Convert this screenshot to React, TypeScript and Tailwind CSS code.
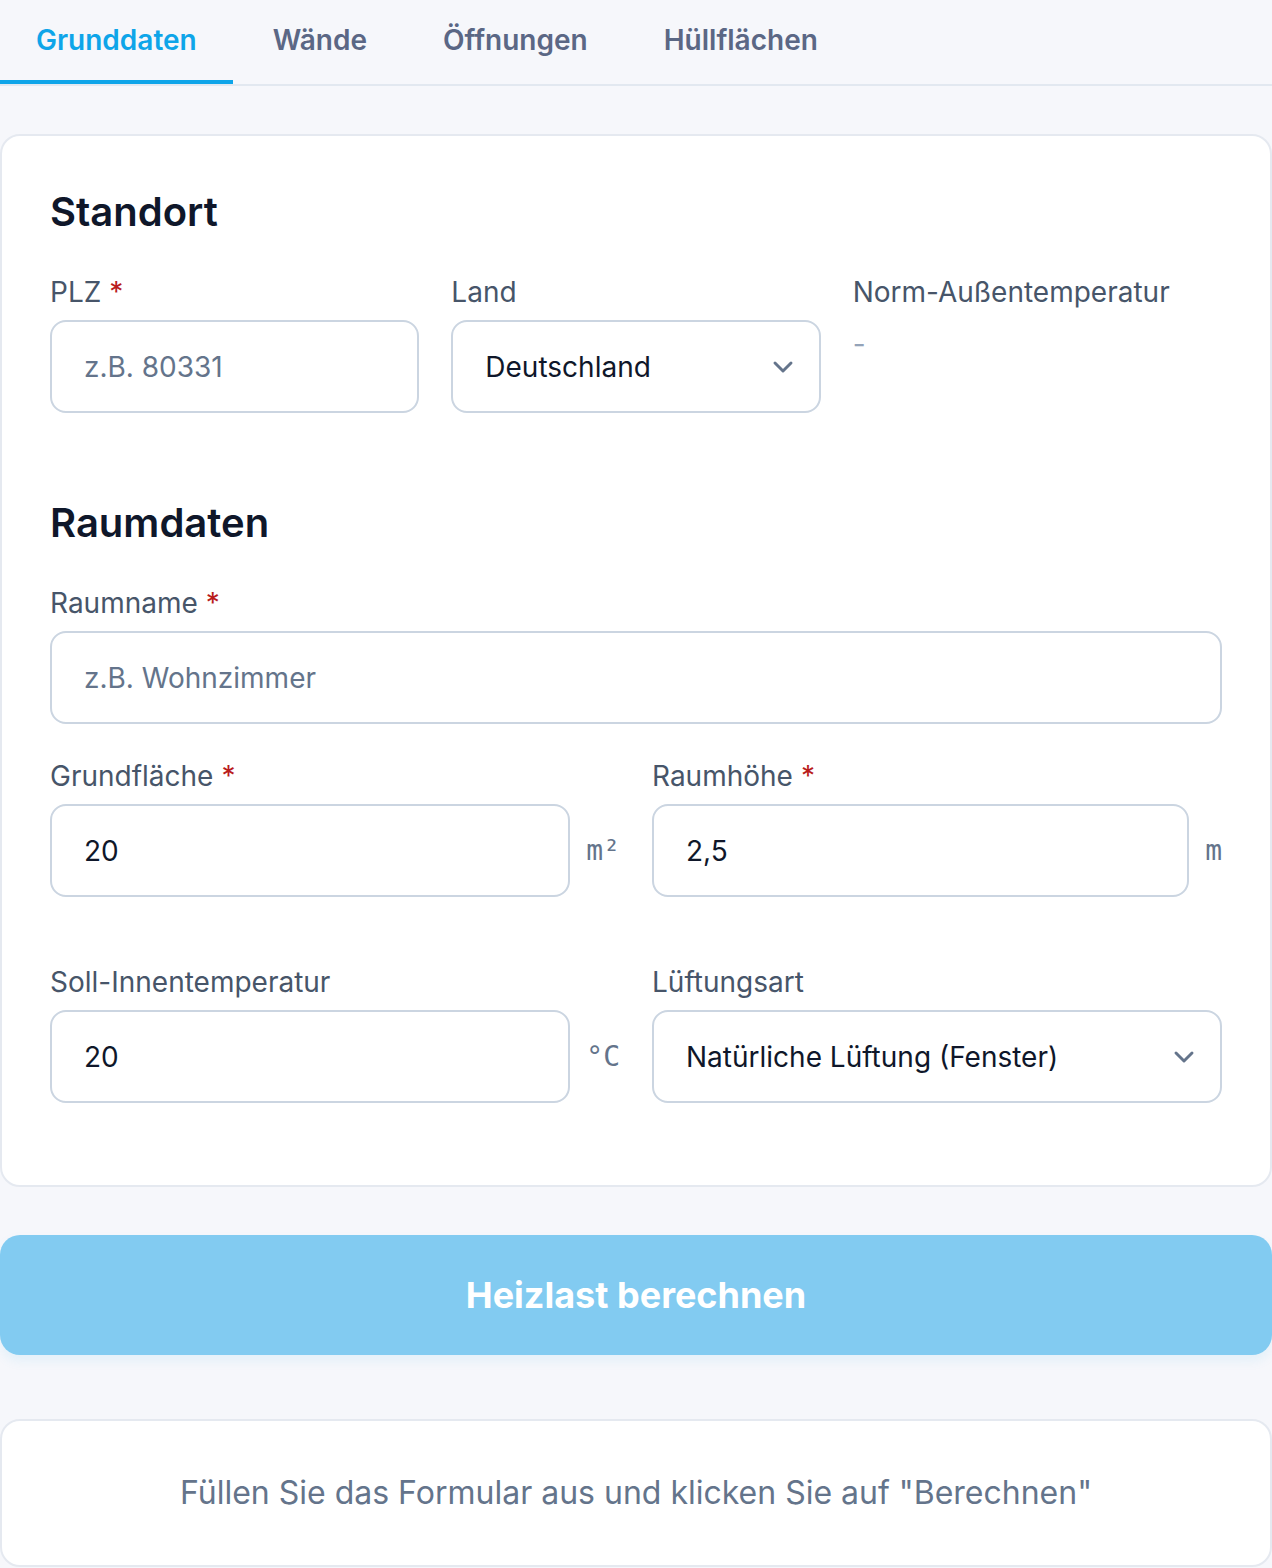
import React from "react";

const inter = { fontFamily: "Inter, 'Noto Sans', sans-serif" };

function Chevron() {
  return (
    <svg width="32" height="32" viewBox="0 0 24 24" fill="none" stroke="#64748b" strokeWidth="2.2" strokeLinecap="round" strokeLinejoin="round">
      <path d="M6 9l6 6 6-6" />
    </svg>
  );
}

function Label({ children, required }: { children: React.ReactNode; required?: boolean }) {
  return (
    <div className="mb-2 h-10 flex items-center text-[28px] leading-10 text-[#475569]">
      <span>{children}</span>
      {required && <span className="ml-2 text-[#b91c1c]">*</span>}
    </div>
  );
}

function Input({ value, placeholder }: { value?: string; placeholder?: string }) {
  return (
    <div className="h-[93px] w-full rounded-[16px] border-2 border-[#cbd5e1] bg-white px-8 flex items-center text-[28px]">
      {value ? (
        <span className="text-[#0f172a]">{value}</span>
      ) : (
        <span className="text-[#64748b]">{placeholder}</span>
      )}
    </div>
  );
}

function Select({ value }: { value: string }) {
  return (
    <div className="h-[93px] w-full rounded-[16px] border-2 border-[#cbd5e1] bg-white pl-8 pr-5 flex items-center justify-between text-[28px]">
      <span className="text-[#0f172a]">{value}</span>
      <Chevron />
    </div>
  );
}

function Unit({ children }: { children: React.ReactNode }) {
  return (
    <span className="text-[28px] text-[#64748b]" style={{ fontFamily: "'DejaVu Sans Mono', 'Liberation Mono', monospace" }}>
      {children}
    </span>
  );
}

export default function App() {
  const tabs = ["Grunddaten", "Wände", "Öffnungen", "Hüllflächen"];
  return (
    <div className="min-h-[1568px] w-[1272px] bg-[#f6f7fb]" style={inter}>
      <div className="flex gap-1 border-b-2 border-[#e2e8f0] h-[86px]">
        {tabs.map((t, i) => (
          <div
            key={t}
            className={
              i === 0
                ? "px-9 h-[84px] flex items-center text-[28px] font-semibold text-[#0ea5e9] border-b-4 border-[#0ea5e9]"
                : "px-9 h-[84px] flex items-center text-[28px] font-semibold text-[#5b6785] border-b-4 border-transparent"
            }
          >
            {t}
          </div>
        ))}
      </div>

      <div className="mt-[48px] rounded-[20px] border-2 border-[#e5e9f0] bg-white px-12 pt-12 pb-[82px]">
        <h2 className="text-[40px] leading-[56px] font-semibold text-[#0f172a] mb-8">Standort</h2>
        <div className="grid grid-cols-3 gap-8 mb-[82px]">
          <div>
            <Label required>PLZ</Label>
            <Input placeholder="z.B. 80331" />
          </div>
          <div>
            <Label>Land</Label>
            <Select value="Deutschland" />
          </div>
          <div>
            <Label>Norm-Außentemperatur</Label>
            <div className="text-[28px] leading-10 text-[#94a3b8] mt-3">-</div>
          </div>
        </div>

        <h2 className="text-[40px] leading-[56px] font-semibold text-[#0f172a] mb-8">Raumdaten</h2>
        <div className="mb-8">
          <Label required>Raumname</Label>
          <Input placeholder="z.B. Wohnzimmer" />
        </div>
        <div className="grid grid-cols-2 gap-8 mb-[65px]">
          <div>
            <Label required>Grundfläche</Label>
            <div className="flex items-center gap-4">
              <Input value="20" />
              <Unit>m²</Unit>
            </div>
          </div>
          <div>
            <Label required>Raumhöhe</Label>
            <div className="flex items-center gap-4">
              <Input value="2,5" />
              <Unit>m</Unit>
            </div>
          </div>
        </div>
        <div className="grid grid-cols-2 gap-8">
          <div>
            <Label>Soll-Innentemperatur</Label>
            <div className="flex items-center gap-4">
              <Input value="20" />
              <Unit>°C</Unit>
            </div>
          </div>
          <div>
            <Label>Lüftungsart</Label>
            <Select value="Natürliche Lüftung (Fenster)" />
          </div>
        </div>
      </div>

      <div className="mt-12 h-[120px] rounded-[20px] bg-[#82cbf1] flex items-center justify-center text-[36px] font-bold text-white shadow-[0_6px_12px_rgba(14,165,233,0.08)]">
        Heizlast berechnen
      </div>

      <div className="mt-16 h-[148px] rounded-[20px] border-2 border-[#e5e9f0] bg-white flex items-center justify-center text-[32px] text-[#64748b]">
        Füllen Sie das Formular aus und klicken Sie auf "Berechnen"
      </div>
    </div>
  );
}
